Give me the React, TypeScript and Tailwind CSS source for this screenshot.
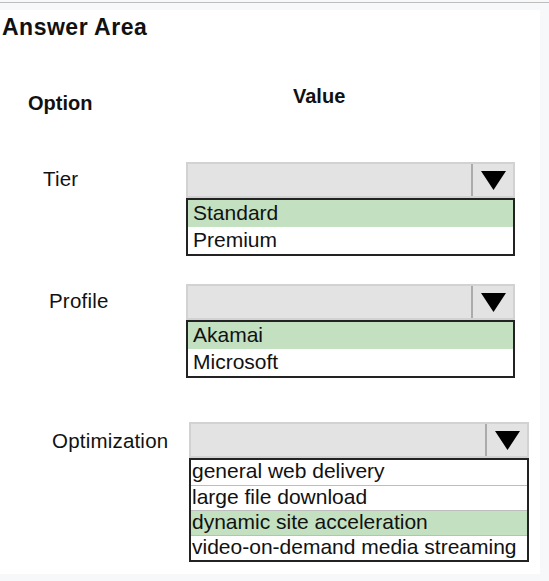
const dropdowns = [
  {
    label: "Tier",
    rowClass: "mt-[49px] pl-[43px]",
    labelClass: "w-[143px] mt-[7px]",
    boxClass: "w-[329px]",
    textPad: "pl-[5px]",
    separated: false,
    options: [
      { text: "Standard", selected: true },
      { text: "Premium", selected: false },
    ],
  },
  {
    label: "Profile",
    rowClass: "mt-[28px] pl-[49px]",
    labelClass: "w-[137px] mt-[7px]",
    boxClass: "w-[329px]",
    textPad: "pl-[5px]",
    separated: false,
    options: [
      { text: "Akamai", selected: true },
      { text: "Microsoft", selected: false },
    ],
  },
  {
    label: "Optimization",
    rowClass: "mt-[44px] pl-[52px]",
    labelClass: "w-[137px] mt-[9px]",
    boxClass: "w-[340px]",
    textPad: "pl-[1px]",
    separated: true,
    options: [
      { text: "general web delivery", selected: false },
      { text: "large file download", selected: false },
      { text: "dynamic site acceleration", selected: true },
      { text: "video-on-demand media streaming", selected: false },
    ],
  },
];

function Arrow() {
  return (
    <svg width="25" height="19" viewBox="0 0 25 19">
      <polygon points="0,0 25,0 12.5,19" fill="#000" />
    </svg>
  );
}

export default function App() {
  return (
    <div
      className="min-h-[581px] w-[549px] bg-[#f7f8fa] pt-[2px] text-[#111]"
      style={{ fontFamily: '"Liberation Sans", Arial, sans-serif' }}
    >
      <div className="h-[1px] w-full bg-[#bdbdbd]" />
      <div className="mt-[7px] h-[564px] w-[540px] bg-white">
        <h1 className="pt-[6px] pl-[2px] text-[23px] leading-[23px] font-bold tracking-[0.5px]">
          Answer Area
        </h1>

        <div className="mt-[47px] flex items-start pl-[28px] text-[20px] leading-[20px] font-bold">
          <div className="w-[265px] mt-[7px]">Option</div>
          <div>Value</div>
        </div>

        {dropdowns.map((d) => (
          <div key={d.label} className={`flex items-start ${d.rowClass}`}>
            <div className={`text-[20.5px] leading-[20px] tracking-[0.2px] ${d.labelClass}`}>
              {d.label}
            </div>
            <div className={d.boxClass}>
              <div className="flex h-[36px] border-2 border-[#d2d2d2] bg-[#e3e3e3]">
                <div className="flex-1" />
                <div className="flex w-[42px] items-center justify-center border-l-2 border-[#ababab]">
                  <Arrow />
                </div>
              </div>
              <div className="border-2 border-[#222] bg-white">
                {d.options.map((o, i) => (
                  <div
                    key={o.text}
                    className={`${d.textPad} ${
                      d.separated ? "h-[25px] leading-[22px]" : "h-[27px] leading-[25px]"
                    } ${d.separated && i > 0 ? "border-t border-[#bdbdbd]" : ""} ${
                      o.selected ? "bg-[#c3e0c1]" : ""
                    } text-[21px] whitespace-nowrap`}
                  >
                    {o.text}
                  </div>
                ))}
              </div>
            </div>
          </div>
        ))}
      </div>
    </div>
  );
}
